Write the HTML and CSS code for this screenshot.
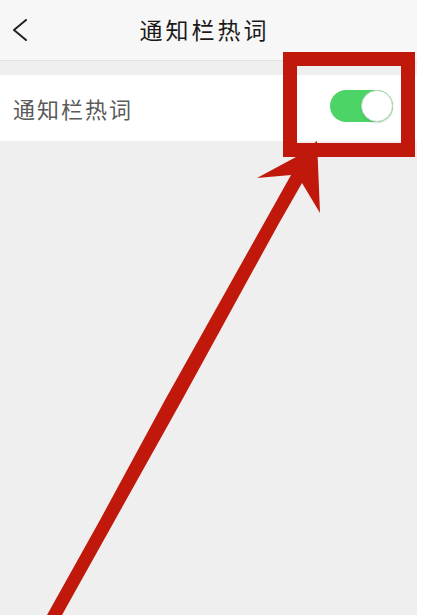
FILE: index.html
```html
<!DOCTYPE html>
<html lang="zh-CN">
<head>
<meta charset="utf-8">
<title>通知栏热词</title>
<link rel="stylesheet" href="styles.css">
</head>
<body>
<div class="screen">
  <header class="header">
    <svg class="back" width="16" height="22" viewBox="0 0 16 22"><polyline points="14,1 2,11 14,21" fill="none" stroke="#222" stroke-width="2" stroke-linecap="round" stroke-linejoin="round"/></svg>
    <h1 class="title">通知栏热词</h1>
    <span class="spacer"></span>
  </header>
  <div class="row">
    <span class="label">通知栏热词</span>
    <span class="toggle"><span class="knob"></span></span>
  </div>
  <svg class="annot" width="421" height="615" viewBox="0 0 421 615">
    <rect x="290" y="59" width="118" height="91" fill="none" stroke="#c1180c" stroke-width="14"/>
    <polygon fill="#c1180c" points="317,141 320,213 302,183 278,225 182,400 115,520 62,615 47,615 100,520 165,400 263,225 291,175 257,178 296,157"/>
  </svg>
</div>
</body>
</html>
```

FILE: styles.css
```css
* { box-sizing: border-box; }
html, body { margin: 0; padding: 0; background: #ffffff; }
body { font-family: "Noto Sans CJK SC", "Noto Sans", sans-serif; }
.screen {
  position: relative;
  width: 417px;
  height: 615px;
  background: #efefef;
  overflow: hidden;
}
.header {
  height: 61px;
  background: #f7f7f7;
  border-bottom: 1px solid #e2e2e2;
  display: grid;
  grid-template-columns: 1fr auto 1fr;
  align-items: center;
  padding: 0 20px 0 12px;
}
.back { display: block; }
.title {
  margin: 0;
  font-size: 23px;
  font-weight: 400;
  color: #1a1a1a;
  letter-spacing: 3px;
  line-height: 1;
  padding-bottom: 2px;
}
.row {
  margin-top: 14px;
  height: 66px;
  background: #ffffff;
  display: flex;
  align-items: center;
  justify-content: space-between;
  padding: 0 24px 0 13px;
}
.label {
  font-size: 22px;
  color: #5a5a5a;
  letter-spacing: 2px;
  line-height: 1;
}
.toggle {
  width: 63px;
  height: 32px;
  border-radius: 16px;
  background: #4cd466;
  display: flex;
  justify-content: flex-end;
  margin-top: -4px;
}
.knob {
  width: 32px;
  height: 32px;
  border-radius: 50%;
  background: #ffffff;
  border: 1px solid #b9dcbf;
  box-shadow: 0 1px 2px rgba(0,0,0,0.15);
}
.annot {
  position: absolute;
  top: 0;
  left: 0;
}
```
